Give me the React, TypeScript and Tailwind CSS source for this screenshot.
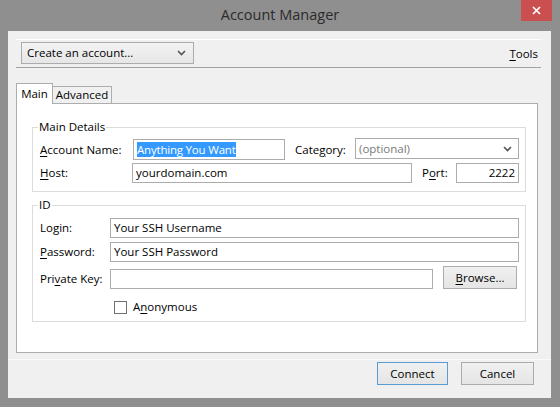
import React from 'react';

const Chevron: React.FC = () => (
  <svg width="9" height="6" viewBox="0 0 9 6" className="shrink-0">
    <polyline points="1,1 4.5,4.5 8,1" fill="none" stroke="#555" strokeWidth="1.6" />
  </svg>
);

const Mn: React.FC<{ children: React.ReactNode }> = ({ children }) => (
  <span className="underline underline-offset-[2px] decoration-[1px]">{children}</span>
);

const inputCls = 'h-full bg-white border border-[#acacac] px-[3px] flex items-center text-black';

export default function App() {
  return (
    <div className="w-[560px] h-[407px] bg-[#8f8f8f] flex flex-col text-[11.5px] text-black font-['Open_Sans','Noto_Sans',sans-serif] overflow-hidden">
      {/* title bar */}
      <div className="h-[31px] shrink-0 relative flex items-center justify-center">
        <span className="text-[14.5px] text-[#2b2b2b] -mt-[1px]">Account Manager</span>
        <div className="absolute left-[521px] top-0 w-[31px] h-[21px] bg-[#c9504e] flex items-center justify-center">
          <svg width="9" height="9" viewBox="0 0 9 9">
            <path d="M1 1 L8 8 M8 1 L1 8" stroke="#fff" strokeWidth="1.7" />
          </svg>
        </div>
      </div>

      {/* client */}
      <div className="ml-[8px] w-[543px] h-[367px] bg-[#f0f0f0] flex flex-col">
        {/* toolbar */}
        <div className="mt-[8px] ml-[8px] mr-[10px] h-[29px] border-t border-t-white border-b border-b-[#a3a3a3] flex items-start justify-between">
          <div className="mt-[2px] ml-[5px] w-[173px] h-[22px] border border-[#acacac] bg-gradient-to-b from-[#f3f3f3] to-[#e6e6e6] flex items-center justify-between pl-[5px] pr-[7px]">
            <span>Create an account...</span>
            <Chevron />
          </div>
          <span className="mt-[5px] mr-[3px]">
            <Mn>T</Mn>ools
          </span>
        </div>

        {/* tabs */}
        <div className="mt-[15px] ml-[8px] flex items-end h-[21px] relative z-10">
          <div className="w-[37px] h-[21px] bg-white border border-[#adadad] border-b-0 flex items-start justify-center pt-[1px]">
            Main
          </div>
          <div className="w-[60px] h-[17px] -ml-[1px] mb-[1px] bg-[#f0f0f0] border border-[#adadad] border-b-0 flex items-center justify-center">
            Advanced
          </div>
        </div>

        {/* tab panel */}
        <div className="-mt-[1px] ml-[8px] w-[522px] h-[250px] bg-white border border-[#adadad] pl-[15px] pr-[11px] pt-[23px]">
          {/* Main Details */}
          <div className="relative h-[65px] border border-[#dcdcdc] pt-[11px] pl-[7px]">
            <span className="absolute left-[5px] -top-[10px] bg-white px-[1px] leading-[18px]">Main Details</span>
            <div className="flex items-center h-[21px]">
              <span className="w-[93px]">
                <Mn>A</Mn>ccount Name:
              </span>
              <div className={`${inputCls} w-[152px] h-[20px] border-[#7a9cd3]`}>
                <span className="bg-[#3399ff] text-white leading-[15px] tracking-[-0.2px]">Anything You Want</span>
              </div>
              <span className="ml-[10px] w-[60px]">
                Cate<Mn>g</Mn>ory:
              </span>
              <div className="w-[164px] h-[21px] bg-white border border-[#acacac] flex items-center justify-between pl-[3px] pr-[6px] -mt-[2px]">
                <span className="text-[#7a7a7a]">(optional)</span>
                <Chevron />
              </div>
            </div>
            <div className="flex items-center h-[20px] mt-[3px]">
              <span className="w-[92px]">
                <Mn>H</Mn>ost:
              </span>
              <div className={`${inputCls} w-[280px]`}>yourdomain.com</div>
              <span className="ml-[10px] w-[34px]">
                P<Mn>o</Mn>rt:
              </span>
              <div className={`${inputCls} w-[63px] justify-end`}>2222</div>
            </div>
          </div>

          {/* ID */}
          <div className="relative mt-[13px] h-[117px] border border-[#dcdcdc] pt-[12px] pl-[7px]">
            <span className="absolute left-[5px] -top-[10px] bg-white px-[1px] leading-[18px]">ID</span>
            <div className="flex items-center h-[20px]">
              <span className="w-[70px]">Login:</span>
              <div className={`${inputCls} w-[409px]`}>Your SSH Username</div>
            </div>
            <div className="flex items-center h-[20px] mt-[4px]">
              <span className="w-[70px]">
                <Mn>P</Mn>assword:
              </span>
              <div className={`${inputCls} w-[409px]`}>Your SSH Password</div>
            </div>
            <div className="flex items-end h-[23px] mt-[4px]">
              <span className="w-[70px] self-center mt-[3px]">
                Pri<Mn>v</Mn>ate Key:
              </span>
              <div className={`${inputCls} w-[323px] !h-[20px]`} />
              <div className="ml-[10px] w-[74px] h-[23px] border border-[#acacac] bg-gradient-to-b from-[#f0f0f0] to-[#e5e5e5] flex items-center justify-center">
                <span>
                  <Mn>B</Mn>rowse...
                </span>
              </div>
            </div>
            <div className="flex items-center h-[14px] mt-[11px] pl-[74px]">
              <div className="w-[13px] h-[13px] border border-[#707070] bg-white" />
              <span className="ml-[6px]">
                A<Mn>n</Mn>onymous
              </span>
            </div>
          </div>
        </div>

        {/* buttons */}
        <div className="mt-[6px] border-t border-t-[#fafafa] pt-[2px] flex justify-end pr-[17px] gap-[13px]">
          <div className="w-[71px] h-[23px] border border-[#5b9bd5] bg-gradient-to-b from-[#f0f0f0] to-[#e5e5e5] flex items-center justify-center">
            Connect
          </div>
          <div className="w-[73px] h-[23px] border border-[#acacac] bg-gradient-to-b from-[#f0f0f0] to-[#e5e5e5] flex items-center justify-center">
            Cancel
          </div>
        </div>
      </div>
    </div>
  );
}
